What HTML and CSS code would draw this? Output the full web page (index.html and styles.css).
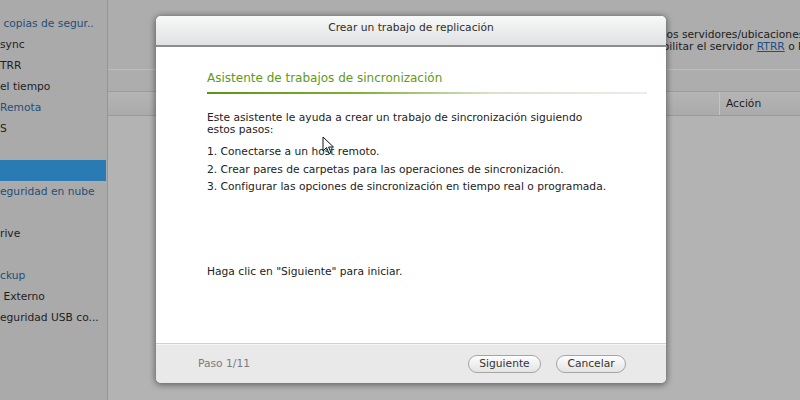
FILE: index.html
```html
<!DOCTYPE html>
<html lang="es">
<head>
<meta charset="utf-8">
<title>Crear un trabajo de replicación</title>
<link rel="stylesheet" href="styles.css">
</head>
<body>
<div class="app">
  <nav class="sidebar">
    <ul class="tree">
      <li class="hdr">&nbsp;copias de segur..</li>
      <li>sync</li>
      <li>TRR</li>
      <li>el tiempo</li>
      <li class="hdr">Remota</li>
      <li>S</li>
      <li></li>
      <li class="sel"></li>
      <li class="hdr">eguridad en nube</li>
      <li></li>
      <li>rive</li>
      <li></li>
      <li class="hdr">ckup</li>
      <li>&nbsp;Externo</li>
      <li>eguridad USB co...</li>
    </ul>
  </nav>
  <main class="content">
    <div class="intro">
      <p class="l1">entre dos servidores/ubicaciones remotas.</p>
      <p class="l2">Habilitar el servidor <a href="#">RTRR</a> o Rsync.</p>
    </div>
    <div class="toolbar"></div>
    <div class="table-head">
      <span class="col-main"></span>
      <span class="col-action">Acción</span>
    </div>
    <div class="table-body"></div>
  </main>
</div>

<div class="dialog">
  <header class="dlg-title">Crear un trabajo de replicación</header>
  <section class="dlg-body">
    <h2 class="wiz-title">Asistente de trabajos de sincronización</h2>
    <div class="wiz-rule"></div>
    <p class="wiz-text">Este asistente le ayuda a crear un trabajo de sincronización siguiendo estos pasos:</p>
    <ol class="steps">
      <li>1. Conectarse a un host remoto.</li>
      <li>2. Crear pares de carpetas para las operaciones de sincronización.</li>
      <li>3. Configurar las opciones de sincronización en tiempo real o programada.</li>
    </ol>
    <p class="wiz-start">Haga clic en "Siguiente" para iniciar.</p>
  </section>
  <footer class="dlg-foot">
    <span class="step">Paso 1/11</span>
    <div class="buttons">
      <button class="btn">Siguiente</button>
      <button class="btn">Cancelar</button>
    </div>
  </footer>
</div>

<svg class="cursor" width="14" height="20" viewBox="0 0 14 20">
  <path d="M1 1 L1 15 L4.5 11.5 L7 17.5 L9 16.6 L6.6 11 L11.5 11 Z" fill="#fff" stroke="#111" stroke-width="1"/>
</svg>
</body>
</html>
```

FILE: styles.css
```css
* { box-sizing: border-box; }

html, body {
  margin: 0;
  padding: 0;
  width: 800px;
  height: 400px;
  overflow: hidden;
  background: #acacac;
  font-family: "DejaVu Sans", Verdana, sans-serif;
  font-size: 10.7px;
  color: #222;
}

.app {
  display: flex;
  height: 400px;
}

/* left navigation tree */
.sidebar {
  width: 108px;
  flex: none;
  background: #aaaaaa;
  border-right: 1px solid #959595;
  overflow: hidden;
}

.tree {
  list-style: none;
  margin: 13px 0 0;
  padding: 0;
}

.tree li {
  height: 21px;
  line-height: 21px;
  white-space: nowrap;
  overflow: hidden;
  color: #1e1e1e;
}

.tree li.hdr { color: #1f4e79; }

.tree li.sel {
  background: #2a7ab3;
  margin-right: 1px;
}

/* main area behind the dialog */
.content {
  flex: 1;
  min-width: 0;
  overflow: hidden;
  background: #adadad;
  display: flex;
  flex-direction: column;
}

.intro {
  padding-top: 29px;
  height: 69px;
  flex: none;
  white-space: nowrap;
  color: #1c1c1c;
}

.intro p {
  margin: 0;
  line-height: 12px;
}

.intro .l1 { padding-left: 520px; }
.intro .l2 { padding-left: 540px; }

.intro a {
  color: #1e4f85;
  text-decoration: underline;
}

.toolbar {
  height: 23px;
  flex: none;
  border-top: 1px solid #bdbdbd;
  border-bottom: 1px solid #9c9c9c;
  background: #adadad;
}

.table-head {
  display: flex;
  flex: none;
  height: 24px;
  background: linear-gradient(#b5b5b5, #aaaaaa);
  border-bottom: 1px solid #9a9a9a;
}

.table-head .col-main {
  width: 612px;
  flex: none;
  border-right: 1px solid #c4c4c4;
}

.table-head .col-action {
  line-height: 23px;
  padding-left: 6px;
  color: #1c1c1c;
}

.table-body {
  flex: 1;
  background: #b3b3b3;
}

/* modal */
.dialog {
  position: absolute;
  left: 156px;
  top: 16px;
  width: 510px;
  height: 367px;
  border-radius: 5px;
  background: #fff;
  box-shadow: 0 1px 6px 1px rgba(0, 0, 0, 0.45);
  display: flex;
  flex-direction: column;
  overflow: hidden;
}

.dlg-title {
  height: 31px;
  flex: none;
  line-height: 23px;
  text-align: center;
  color: #2e2e2e;
  background: linear-gradient(#f7f8f8, #e6e8e9 70%, #dfe1e2);
  border-bottom: 2px solid #8d8d8d;
}

.dlg-body {
  flex: 1;
  padding: 0 0 0 51px;
}

.wiz-title {
  margin: 23px 0 0;
  font-size: 12px;
  font-weight: normal;
  color: #5f9a18;
  line-height: 16px;
}

.wiz-rule {
  margin-top: 6px;
  height: 2px;
  width: 440px;
  background: linear-gradient(to right, #5a9512 0%, #7fb23a 35%, #d8e3c8 65%, #ececec 100%);
}

.wiz-text {
  margin: 18px 0 0;
  width: 400px;
  line-height: 12px;
}

.steps {
  list-style: none;
  margin: 7px 0 0;
  padding: 0;
}

.steps li { line-height: 17.5px; }

.wiz-start { margin: 69px 0 0; }

.dlg-foot {
  height: 40px;
  flex: none;
  display: flex;
  align-items: center;
  justify-content: space-between;
  padding: 0 40px 0 42px;
  background: #e9e9e9;
  border-top: 1px solid #d2d2d2;
  box-shadow: inset 0 1px 0 #f6f6f6;
}

.step { color: #7a7a7a; }

.buttons {
  display: flex;
  gap: 15px;
}

.btn {
  height: 18px;
  padding: 0;
  border: 1px solid #a5a5a5;
  border-radius: 9px;
  background: linear-gradient(#fdfdfd, #e4e4e4);
  font: inherit;
  color: #333;
  line-height: 16px;
  width: 73px;
}

.btn + .btn { width: 70px; }

.cursor {
  position: absolute;
  left: 322px;
  top: 136px;
}
```
